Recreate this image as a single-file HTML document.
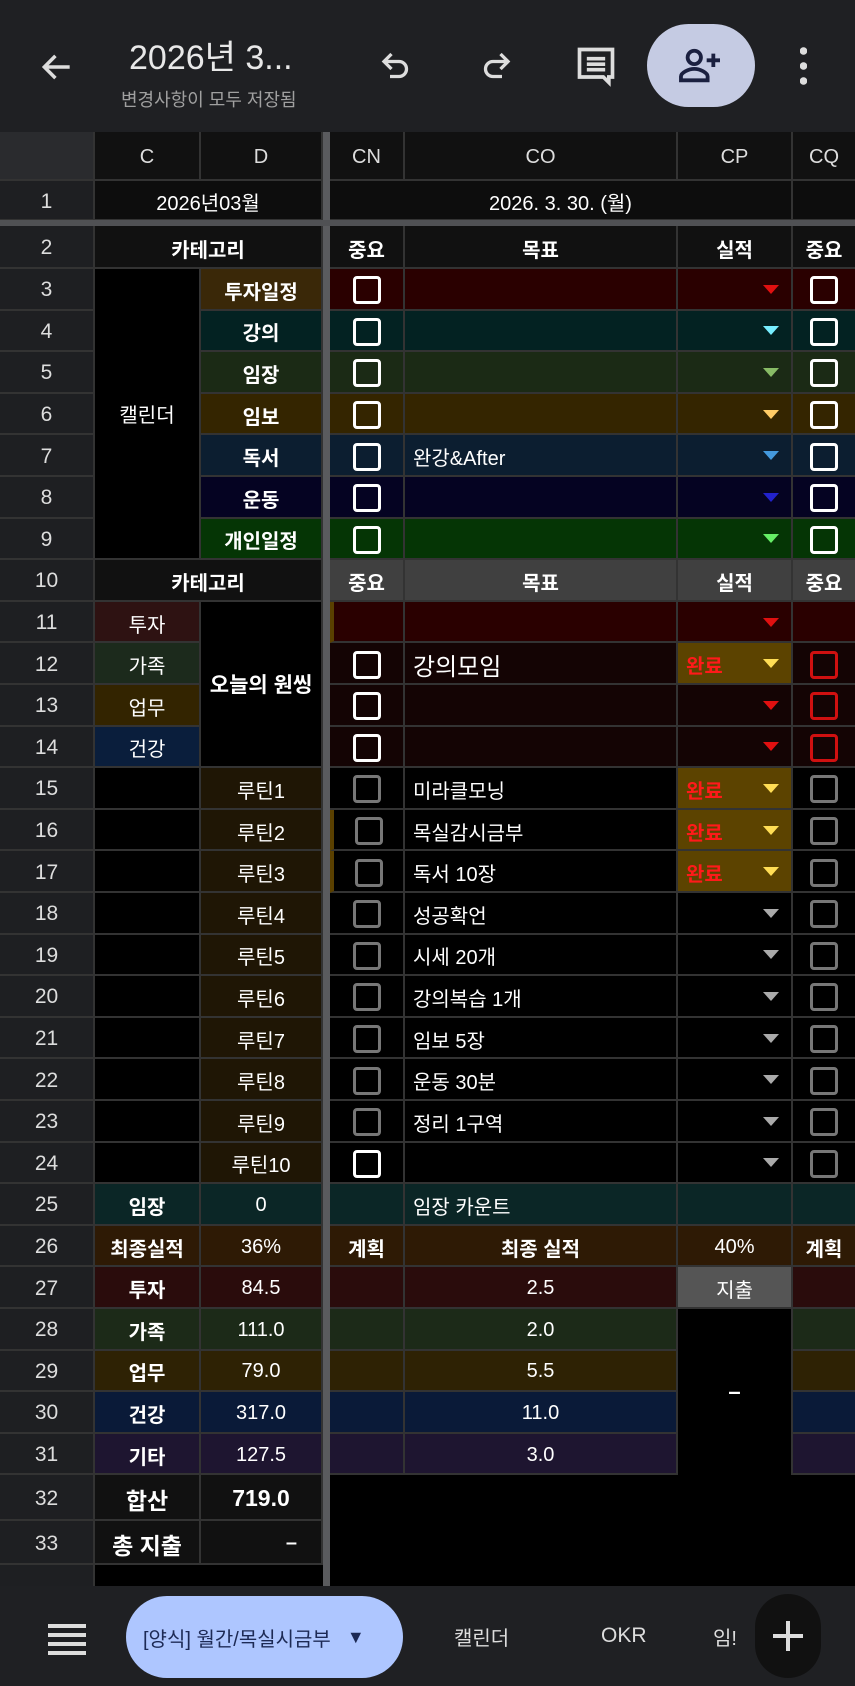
<!DOCTYPE html>
<html><head><meta charset="utf-8">
<style>
*{margin:0;padding:0;box-sizing:border-box}
body{width:855px;height:1686px;background:#000;overflow:hidden;font-family:"Liberation Sans","Noto Sans CJK KR",sans-serif;color:#fff;position:relative}
.tb{position:absolute;left:0;top:0;width:855px;height:132px;background:#1f2023}
.row{position:absolute;left:0;width:855px;display:flex}
.c{height:100%;border-right:2px solid #333;border-bottom:2px solid #333;display:flex;align-items:center;justify-content:center;font-size:20px;white-space:nowrap;overflow:hidden;position:relative;padding-top:3px}
.rh{width:95px;background:#1e1f22;color:#ddd;font-size:21px}
.C{width:106px}.D{width:122px}.S{width:7px;background:#5a5b5e;border:none}
.CN{width:75px}.CO{width:273px;justify-content:flex-start;padding-left:8px}.CP{width:115px}.CQ{width:62px;border-right:none}
.b{font-weight:bold}
.cb{width:28px;height:28px;border:3px solid #fff;border-radius:4px}
.g{border-color:#777}.r{border-color:#d01010}
.ar{position:absolute;right:12px;top:50%;margin-top:-4px;width:0;height:0;border-left:8px solid transparent;border-right:8px solid transparent;border-top:9px solid #e01010}
.done{position:absolute;left:8px;color:#ff1a1a;font-size:20px;font-weight:bold}
.bl{position:absolute;top:0;height:100px;display:flex;align-items:center;font-size:20px;color:#ddd}
</style></head><body>
<div class="tb">
<svg style="position:absolute;left:38px;top:48px" width="38" height="38" viewBox="0 0 24 24"><path d="M20 12H5M11 5l-7 7 7 7" stroke="#ddd" stroke-width="2.2" fill="none"/></svg>
<div style="position:absolute;left:129px;top:30px;font-size:34px;color:#e8e8e8">2026년 3...</div>
<div style="position:absolute;left:121px;top:86px;font-size:18px;color:#a0a0a0">변경사항이 모두 저장됨</div>
<svg style="position:absolute;left:378px;top:48px" width="36" height="36" viewBox="0 0 24 24"><path d="M9 4L4 9l5 5M4 9h10a5 5 0 0 1 0 10H8" stroke="#ddd" stroke-width="2.2" fill="none"/></svg>
<svg style="position:absolute;left:478px;top:48px" width="36" height="36" viewBox="0 0 24 24"><path d="M15 4l5 5-5 5M20 9H10a5 5 0 0 0 0 10h6" stroke="#ddd" stroke-width="2.2" fill="none"/></svg>
<svg style="position:absolute;left:574px;top:44px" width="44" height="44" viewBox="0 0 24 24"><path d="M3 3h18v15h-2v3l-3-3H3z" stroke="#ddd" stroke-width="2" fill="none"/><path d="M7 8h10M7 11h10M7 14h10" stroke="#ddd" stroke-width="2"/></svg>
<div style="position:absolute;left:647px;top:24px;width:108px;height:83px;border-radius:42px;background:#c5cbe3"></div>
<svg style="position:absolute;left:677px;top:46px" width="46" height="40" viewBox="0 0 24 21"><circle cx="9" cy="6" r="3.5" stroke="#1b2040" stroke-width="2" fill="none"/><path d="M2 18v-2c0-2 4-4 7-4s7 2 7 4v2z" stroke="#1b2040" stroke-width="2" fill="none"/><path d="M19 4v7M15.5 7.5h7" stroke="#1b2040" stroke-width="2"/></svg>
<div style="position:absolute;left:800px;top:46px;width:7px;height:40px;background:radial-gradient(circle at 3.5px 5px,#ddd 3.5px,transparent 4px),radial-gradient(circle at 3.5px 20px,#ddd 3.5px,transparent 4px),radial-gradient(circle at 3.5px 35px,#ddd 3.5px,transparent 4px)"></div>
</div>

<div class="row" style="top:132px;height:49px;background:#111">
<div class="c rh" style="background:#2a2b2e"></div><div class="c C" style="background:#111;color:#ddd">C</div><div class="c D" style="background:#111;color:#ddd">D</div><div class="c S"></div><div class="c CN" style="color:#ddd">CN</div><div class="c CO" style="justify-content:center;padding-left:0;color:#ddd">CO</div><div class="c CP" style="color:#ddd">CP</div><div class="c CQ" style="color:#ddd">CQ</div>
</div>
<div class="row" style="top:181px;height:40px">
<div class="c rh">1</div><div class="c" style="width:228px;background:#0d0d0d">2026년03월</div><div class="c S"></div><div class="c" style="width:463px;background:#0d0d0d">2026. 3. 30. (월)</div><div class="c CQ" style="background:#0d0d0d"></div>
</div>
<div style="position:absolute;left:0;top:220px;width:855px;height:6px;background:#505154"></div>
<div class="row b" style="top:226px;height:43px">
<div class="c rh" style="font-weight:normal">2</div><div class="c" style="width:228px;background:#111">카테고리</div><div class="c S"></div><div class="c CN" style="background:#111">중요</div><div class="c CO" style="justify-content:center;padding-left:0;background:#111">목표</div><div class="c CP" style="background:#111">실적</div><div class="c CQ" style="background:#111">중요</div>
</div>

<div class="row" style="top:269px;height:41.6px"><div class="c rh">3</div><div class="c C" style="background:#000"></div><div class="c D b" style="background:#3a2808">투자일정</div><div class="c S"></div><div class="c CN" style="background:#2a0000"><div class="cb"></div></div><div class="c CO" style="background:#2a0000"></div><div class="c CP" style="background:#2a0000"><div class="ar"></div></div><div class="c CQ" style="background:#2a0000"><div class="cb"></div></div></div>
<div class="row" style="top:310.6px;height:41.6px"><div class="c rh">4</div><div class="c C" style="background:#000"></div><div class="c D b" style="background:#032222">강의</div><div class="c S"></div><div class="c CN" style="background:#032222"><div class="cb"></div></div><div class="c CO" style="background:#032222"></div><div class="c CP" style="background:#032222"><div class="ar" style="border-top-color:#7ef"></div></div><div class="c CQ" style="background:#032222"><div class="cb"></div></div></div>
<div class="row" style="top:352.2px;height:41.6px"><div class="c rh">5</div><div class="c C" style="background:#000"></div><div class="c D b" style="background:#1b2a15">임장</div><div class="c S"></div><div class="c CN" style="background:#1b2a15"><div class="cb"></div></div><div class="c CO" style="background:#1b2a15"></div><div class="c CP" style="background:#1b2a15"><div class="ar" style="border-top-color:#8b6"></div></div><div class="c CQ" style="background:#1b2a15"><div class="cb"></div></div></div>
<div class="row" style="top:393.8px;height:41.6px"><div class="c rh">6</div><div class="c C" style="background:#000"></div><div class="c D b" style="background:#342500">임보</div><div class="c S"></div><div class="c CN" style="background:#342500"><div class="cb"></div></div><div class="c CO" style="background:#342500"></div><div class="c CP" style="background:#342500"><div class="ar" style="border-top-color:#fc6"></div></div><div class="c CQ" style="background:#342500"><div class="cb"></div></div></div>
<div class="row" style="top:435.4px;height:41.6px"><div class="c rh">7</div><div class="c C" style="background:#000"></div><div class="c D b" style="background:#0c1e30">독서</div><div class="c S"></div><div class="c CN" style="background:#0c1e30"><div class="cb"></div></div><div class="c CO" style="background:#0c1e30">완강&amp;After</div><div class="c CP" style="background:#0c1e30"><div class="ar" style="border-top-color:#49d"></div></div><div class="c CQ" style="background:#0c1e30"><div class="cb"></div></div></div>
<div class="row" style="top:477px;height:41.6px"><div class="c rh">8</div><div class="c C" style="background:#000"></div><div class="c D b" style="background:#050322">운동</div><div class="c S"></div><div class="c CN" style="background:#050322"><div class="cb"></div></div><div class="c CO" style="background:#050322"></div><div class="c CP" style="background:#050322"><div class="ar" style="border-top-color:#22c"></div></div><div class="c CQ" style="background:#050322"><div class="cb"></div></div></div>
<div class="row" style="top:518.6px;height:41.6px"><div class="c rh">9</div><div class="c C" style="background:#000"></div><div class="c D b" style="background:#053505">개인일정</div><div class="c S"></div><div class="c CN" style="background:#053505"><div class="cb"></div></div><div class="c CO" style="background:#053505"></div><div class="c CP" style="background:#053505"><div class="ar" style="border-top-color:#6e6"></div></div><div class="c CQ" style="background:#053505"><div class="cb"></div></div></div>
<div style="position:absolute;left:95px;top:269px;width:104px;height:289px;background:#000;display:flex;align-items:center;justify-content:center;font-size:20px">캘린더</div>

<div class="row b" style="top:560.2px;height:41.6px"><div class="c rh" style="font-weight:normal">10</div><div class="c" style="width:228px;background:#111">카테고리</div><div class="c S"></div><div class="c CN" style="background:#404040">중요</div><div class="c CO" style="justify-content:center;padding-left:0;background:#404040">목표</div><div class="c CP" style="background:#404040">실적</div><div class="c CQ" style="background:#404040">중요</div></div>
<div class="row" style="top:601.8px;height:41.6px"><div class="c rh">11</div><div class="c C" style="background:#2e1212">투자</div><div class="c D" style="background:#000"></div><div class="c S"></div><div class="c CN" style="background:#2a0000;border-left:4px solid #5a4000"></div><div class="c CO" style="background:#2a0000"></div><div class="c CP" style="background:#2a0000"><div class="ar"></div></div><div class="c CQ" style="background:#2a0000"></div></div>
<div class="row" style="top:643.4px;height:41.6px"><div class="c rh">12</div><div class="c C" style="background:#1c2a1c">가족</div><div class="c D" style="background:#000"></div><div class="c S"></div><div class="c CN" style="background:#140404"><div class="cb"></div></div><div class="c CO" style="background:#140404;font-size:24px">강의모임</div><div class="c CP" style="background:#5c4300"><span class="done">완료</span><div class="ar" style="border-top-color:#fd5"></div></div><div class="c CQ" style="background:#140404"><div class="cb r"></div></div></div>
<div class="row" style="top:685px;height:41.6px"><div class="c rh">13</div><div class="c C" style="background:#332400">업무</div><div class="c D" style="background:#000"></div><div class="c S"></div><div class="c CN" style="background:#140404"><div class="cb"></div></div><div class="c CO" style="background:#140404"></div><div class="c CP" style="background:#140404"><div class="ar"></div></div><div class="c CQ" style="background:#140404"><div class="cb r"></div></div></div>
<div class="row" style="top:726.6px;height:41.6px"><div class="c rh">14</div><div class="c C" style="background:#0a1e3c">건강</div><div class="c D" style="background:#000"></div><div class="c S"></div><div class="c CN" style="background:#140404"><div class="cb"></div></div><div class="c CO" style="background:#140404"></div><div class="c CP" style="background:#140404"><div class="ar"></div></div><div class="c CQ" style="background:#140404"><div class="cb r"></div></div></div>
<div style="position:absolute;left:201px;top:601.8px;width:120px;height:164px;background:#000;display:flex;align-items:center;justify-content:center;font-size:21px;font-weight:bold">오늘의 원씽</div>

<div class="row" style="top:768.2px;height:41.6px"><div class="c rh">15</div><div class="c C" style="background:#000"></div><div class="c D" style="background:#1f1605">루틴1</div><div class="c S"></div><div class="c CN"><div class="cb g"></div></div><div class="c CO">미라클모닝</div><div class="c CP" style="background:#5c4300"><span class="done">완료</span><div class="ar" style="border-top-color:#fd5"></div></div><div class="c CQ"><div class="cb g"></div></div></div>
<div class="row" style="top:809.8px;height:41.6px"><div class="c rh">16</div><div class="c C" style="background:#000"></div><div class="c D" style="background:#1f1605">루틴2</div><div class="c S"></div><div class="c CN" style="border-left:4px solid #5a4000"><div class="cb g"></div></div><div class="c CO">목실감시금부</div><div class="c CP" style="background:#5c4300"><span class="done">완료</span><div class="ar" style="border-top-color:#fd5"></div></div><div class="c CQ"><div class="cb g"></div></div></div>
<div class="row" style="top:851.4px;height:41.6px"><div class="c rh">17</div><div class="c C" style="background:#000"></div><div class="c D" style="background:#1f1605">루틴3</div><div class="c S"></div><div class="c CN" style="border-left:4px solid #5a4000"><div class="cb g"></div></div><div class="c CO">독서 10장</div><div class="c CP" style="background:#5c4300"><span class="done">완료</span><div class="ar" style="border-top-color:#fd5"></div></div><div class="c CQ"><div class="cb g"></div></div></div>
<div class="row" style="top:893px;height:41.6px"><div class="c rh">18</div><div class="c C" style="background:#000"></div><div class="c D" style="background:#1f1605">루틴4</div><div class="c S"></div><div class="c CN"><div class="cb g"></div></div><div class="c CO">성공확언</div><div class="c CP"><div class="ar" style="border-top-color:#aaa"></div></div><div class="c CQ"><div class="cb g"></div></div></div>
<div class="row" style="top:934.6px;height:41.6px"><div class="c rh">19</div><div class="c C" style="background:#000"></div><div class="c D" style="background:#1f1605">루틴5</div><div class="c S"></div><div class="c CN"><div class="cb g"></div></div><div class="c CO">시세 20개</div><div class="c CP"><div class="ar" style="border-top-color:#aaa"></div></div><div class="c CQ"><div class="cb g"></div></div></div>
<div class="row" style="top:976.2px;height:41.6px"><div class="c rh">20</div><div class="c C" style="background:#000"></div><div class="c D" style="background:#1f1605">루틴6</div><div class="c S"></div><div class="c CN"><div class="cb g"></div></div><div class="c CO">강의복습 1개</div><div class="c CP"><div class="ar" style="border-top-color:#aaa"></div></div><div class="c CQ"><div class="cb g"></div></div></div>
<div class="row" style="top:1017.8px;height:41.6px"><div class="c rh">21</div><div class="c C" style="background:#000"></div><div class="c D" style="background:#1f1605">루틴7</div><div class="c S"></div><div class="c CN"><div class="cb g"></div></div><div class="c CO">임보 5장</div><div class="c CP"><div class="ar" style="border-top-color:#aaa"></div></div><div class="c CQ"><div class="cb g"></div></div></div>
<div class="row" style="top:1059.4px;height:41.6px"><div class="c rh">22</div><div class="c C" style="background:#000"></div><div class="c D" style="background:#1f1605">루틴8</div><div class="c S"></div><div class="c CN"><div class="cb g"></div></div><div class="c CO">운동 30분</div><div class="c CP"><div class="ar" style="border-top-color:#aaa"></div></div><div class="c CQ"><div class="cb g"></div></div></div>
<div class="row" style="top:1101px;height:41.6px"><div class="c rh">23</div><div class="c C" style="background:#000"></div><div class="c D" style="background:#1f1605">루틴9</div><div class="c S"></div><div class="c CN"><div class="cb g"></div></div><div class="c CO">정리 1구역</div><div class="c CP"><div class="ar" style="border-top-color:#aaa"></div></div><div class="c CQ"><div class="cb g"></div></div></div>
<div class="row" style="top:1142.6px;height:41.6px"><div class="c rh">24</div><div class="c C" style="background:#000"></div><div class="c D" style="background:#1f1605">루틴10</div><div class="c S"></div><div class="c CN"><div class="cb"></div></div><div class="c CO"></div><div class="c CP"><div class="ar" style="border-top-color:#aaa"></div></div><div class="c CQ"><div class="cb g"></div></div></div>

<div class="row" style="top:1184.2px;height:41.6px"><div class="c rh">25</div><div class="c C b" style="background:#0b2626">임장</div><div class="c D" style="background:#0b2626">0</div><div class="c S"></div><div class="c CN" style="background:#0b2626"></div><div class="c CO" style="background:#0b2626">임장 카운트</div><div class="c CP" style="background:#0b2626"></div><div class="c CQ" style="background:#0b2626"></div></div>
<div class="row" style="top:1225.8px;height:41.6px"><div class="c rh">26</div><div class="c C b" style="background:#2e1a05">최종실적</div><div class="c D" style="background:#2e1a05">36%</div><div class="c S"></div><div class="c CN b" style="background:#2e1a05">계획</div><div class="c CO b" style="justify-content:center;padding-left:0;background:#2e1a05">최종 실적</div><div class="c CP" style="background:#2e1a05">40%</div><div class="c CQ b" style="background:#2e1a05">계획</div></div>
<div class="row" style="top:1267.4px;height:41.6px"><div class="c rh">27</div><div class="c C b" style="background:#2a0c0c">투자</div><div class="c D" style="background:#2a0c0c">84.5</div><div class="c S"></div><div class="c CN" style="background:#2a0c0c"></div><div class="c CO" style="justify-content:center;padding-left:0;background:#2a0c0c">2.5</div><div class="c CP" style="background:#555">지출</div><div class="c CQ" style="background:#2a0c0c"></div></div>
<div class="row" style="top:1309px;height:41.6px"><div class="c rh">28</div><div class="c C b" style="background:#1c2a18">가족</div><div class="c D" style="background:#1c2a18">111.0</div><div class="c S"></div><div class="c CN" style="background:#1c2a18"></div><div class="c CO" style="justify-content:center;padding-left:0;background:#1c2a18">2.0</div><div class="c CP" style="background:#000"></div><div class="c CQ" style="background:#1c2a18"></div></div>
<div class="row" style="top:1350.6px;height:41.6px"><div class="c rh">29</div><div class="c C b" style="background:#2e2204">업무</div><div class="c D" style="background:#2e2204">79.0</div><div class="c S"></div><div class="c CN" style="background:#2e2204"></div><div class="c CO" style="justify-content:center;padding-left:0;background:#2e2204">5.5</div><div class="c CP" style="background:#000"></div><div class="c CQ" style="background:#2e2204"></div></div>
<div class="row" style="top:1392.2px;height:41.6px"><div class="c rh">30</div><div class="c C b" style="background:#0a1a38">건강</div><div class="c D" style="background:#0a1a38">317.0</div><div class="c S"></div><div class="c CN" style="background:#0a1a38"></div><div class="c CO" style="justify-content:center;padding-left:0;background:#0a1a38">11.0</div><div class="c CP" style="background:#000"></div><div class="c CQ" style="background:#0a1a38"></div></div>
<div class="row" style="top:1433.8px;height:41.6px"><div class="c rh">31</div><div class="c C b" style="background:#1e1530">기타</div><div class="c D" style="background:#1e1530">127.5</div><div class="c S"></div><div class="c CN" style="background:#1e1530"></div><div class="c CO" style="justify-content:center;padding-left:0;background:#1e1530">3.0</div><div class="c CP" style="background:#000"></div><div class="c CQ" style="background:#1e1530"></div></div>
<div style="position:absolute;left:678px;top:1309px;width:113px;height:166px;background:#000;display:flex;align-items:center;justify-content:center;font-size:22px;font-weight:bold">–</div>

<div class="row" style="top:1475.4px;height:46px"><div class="c rh">32</div><div class="c C b" style="background:#111;font-size:23px">합산</div><div class="c D b" style="background:#111;font-size:23px">719.0</div><div class="c S"></div><div style="width:525px;background:#000"></div></div>
<div class="row" style="top:1521.4px;height:44px"><div class="c rh">33</div><div class="c C b" style="background:#111;font-size:23px">총 지출</div><div class="c D b" style="background:#111;justify-content:flex-end;padding-right:24px">–</div><div class="c S"></div><div style="width:525px;background:#000"></div></div>
<div class="row" style="top:1565.4px;height:21px"><div style="width:95px;background:#1e1f22;border-right:2px solid #333"></div><div style="width:228px;background:#000"></div><div class="S" style="background:#5a5b5e"></div><div style="width:525px;background:#000"></div></div>

<div style="position:absolute;left:0;top:1586px;width:855px;height:100px;background:#1f2023">
<div style="position:absolute;left:48px;top:38px;width:38px;height:4px;background:#ddd;box-shadow:0 9px 0 #ddd,0 18px 0 #ddd,0 27px 0 #ddd"></div>
<div style="position:absolute;left:126px;top:10px;width:277px;height:82px;border-radius:41px;background:#aec6ff;color:#1d2a55;font-size:20px;display:flex;align-items:center;padding-left:17px">[양식] 월간/목실시금부<span style="margin-left:16px;font-size:18px">▼</span></div>
<div class="bl" style="left:454px">캘린더</div>
<div class="bl" style="left:601px;font-size:21px">OKR</div>
<div class="bl" style="left:713px">임!</div>
<div style="position:absolute;left:755px;top:8px;width:66px;height:84px;border-radius:33px;background:#111"></div>
<svg style="position:absolute;left:771px;top:33px" width="34" height="34" viewBox="0 0 34 34"><path d="M17 2v30M2 17h30" stroke="#ddd" stroke-width="4"/></svg>
</div>
</body></html>
